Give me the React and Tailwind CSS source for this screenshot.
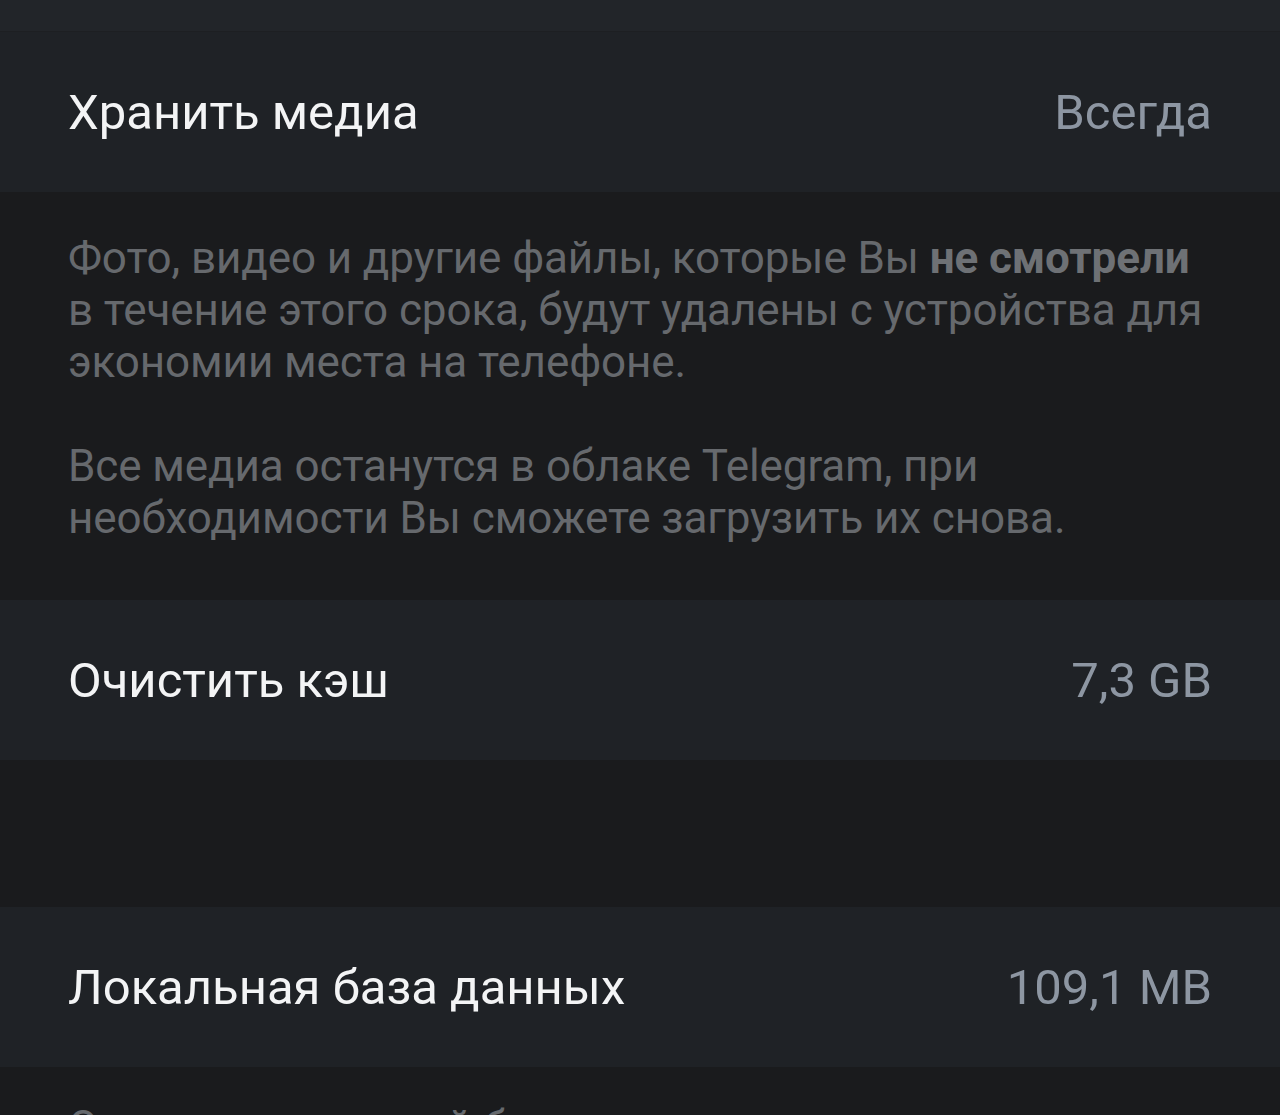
import React from "react";

function Row({ title, value }) {
  return (
    <div className="h-[160px] bg-[#1f2226] flex items-center justify-between pl-[68px] pr-[68px]">
      <span className="text-[49px] text-[#f3f4f5] leading-none">{title}</span>
      <span className="text-[49px] text-[#8d96a2] leading-none">{value}</span>
    </div>
  );
}

export default function App() {
  return (
    <div
      className="w-[1280px] h-[1115px] overflow-hidden bg-[#1a1b1d]"
      style={{ fontFamily: "Roboto, 'Noto Sans', sans-serif" }}
    >
      <div className="h-[32px] bg-[#222529] border-b border-[#1d1f22]" />
      <Row title="Хранить медиа" value="Всегда" />
      <div className="pt-[40px] pb-[56px] pl-[68px] pr-[60px] text-[44px] leading-[52px] tracking-[-0.1px] text-[#66696d]">
        <p>
          Фото, видео и другие файлы, которые Вы{" "}
          <span className="font-bold text-[#6e7175]">не смотрели</span> в течение этого срока, будут удалены с устройства для экономии места на телефоне.
        </p>
        <p className="mt-[52px]">
          Все медиа останутся в облаке Telegram, при необходимости Вы сможете загрузить их снова.
        </p>
      </div>
      <Row title="Очистить кэш" value="7,3 GB" />
      <div className="h-[147px]" />
      <Row title="Локальная база данных" value="109,1 MB" />
      <div className="pt-[34px] pl-[68px] text-[44px] leading-[52px] tracking-[-0.1px] text-[#66696d]">
        Очистка локальной базы данных удалит тексты кэшированных сообщений.
      </div>
    </div>
  );
}
